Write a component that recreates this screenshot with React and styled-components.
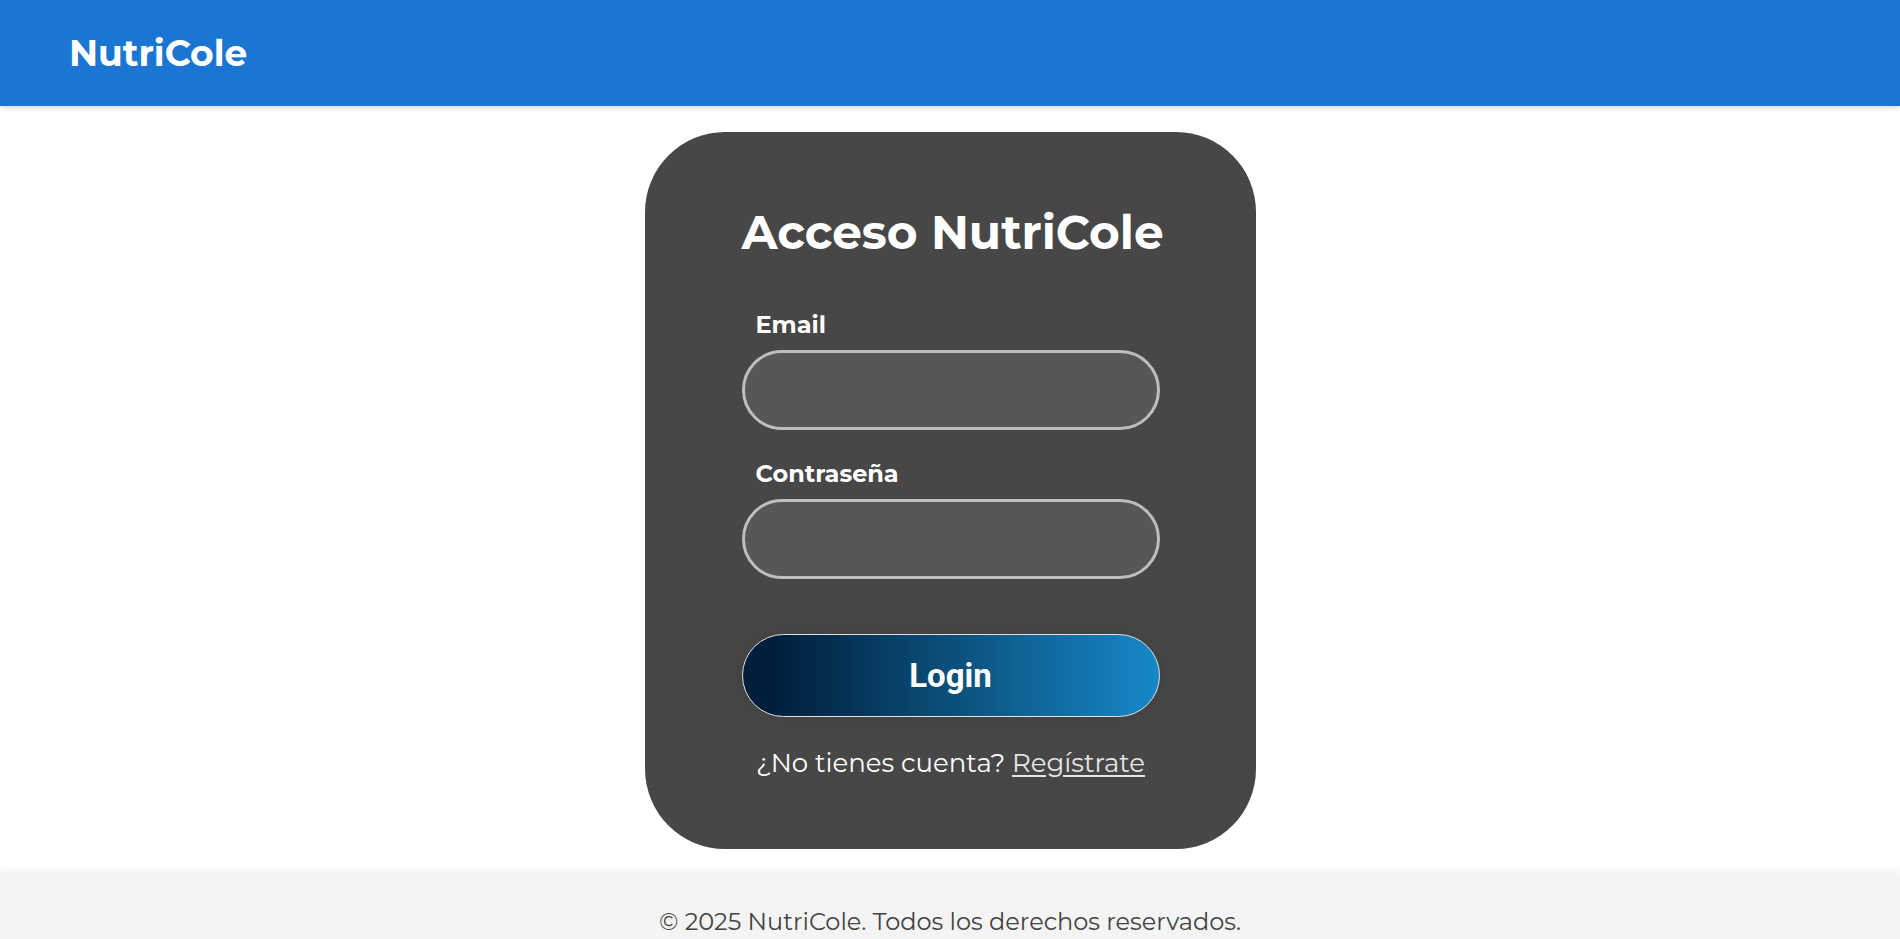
import React from 'react';
import styled, { createGlobalStyle } from 'styled-components';

const GlobalStyle = createGlobalStyle`
  * {
    box-sizing: border-box;
  }
  html, body {
    margin: 0;
    padding: 0;
    background: #ffffff;
    font-family: Montserrat, Inter, "Noto Sans", sans-serif;
  }
`;

const Page = styled.div`
  display: flex;
  flex-direction: column;
  min-height: 100vh;
`;

const Header = styled.header`
  position: relative;
  z-index: 2;
  height: 106px;
  display: flex;
  align-items: center;
  padding: 0 69px;
  background-color: #1a76d2;
  box-shadow: 0 2px 6px rgba(0, 0, 0, 0.15);
`;

const Brand = styled.h1`
  margin: 0;
  color: #ffffff;
  font-size: 36px;
  font-weight: 700;
`;

const Main = styled.main`
  display: flex;
  justify-content: center;
  padding: 26px 0 26px;
`;

const Card = styled.div`
  width: 611px;
  padding: 72px 96px 71px 97px;
  border-radius: 80px;
  background-color: #474747;
  display: flex;
  flex-direction: column;
`;

const Title = styled.h2`
  margin: 0 0 50px;
  height: 58px;
  line-height: 58px;
  text-align: center;
  color: #ffffff;
  font-size: 47px;
  font-weight: 700;
  white-space: nowrap;
`;

const Field = styled.div`
  display: flex;
  flex-direction: column;
  margin-bottom: ${props => props.gap}px;
`;

const Label = styled.label`
  padding-left: 14px;
  margin-bottom: 12px;
  line-height: 26px;
  color: #ffffff;
  font-size: 24px;
  font-weight: 700;
`;

const Input = styled.input`
  width: 100%;
  height: 80px;
  padding: 0 28px;
  border: 3px solid #bebebe;
  border-radius: 40px;
  background-color: #575757;
  color: #ffffff;
  font-size: 20px;
  font-family: inherit;
  outline: none;
`;

const LoginButton = styled.button`
  width: 100%;
  height: 83px;
  border: 1px solid #e0e0e0;
  border-radius: 42px;
  background: linear-gradient(90deg, #001f3d 8%, #0a4a73 45%, #1688c8 100%);
  box-shadow: 0 0 18px rgba(0, 0, 0, 0.12);
  color: #ffffff;
  font-family: Roboto, "Noto Sans", sans-serif;
  font-size: 33px;
  font-weight: 700;
  cursor: pointer;
`;

const SignupText = styled.p`
  margin: 31px 0 0;
  line-height: 30px;
  text-align: center;
  color: #ffffff;
  font-size: 26px;
  font-weight: 400;
`;

const SignupLink = styled.a`
  color: #e6e6e6;
  text-decoration: underline;
  text-underline-offset: 3px;
`;

const Footer = styled.footer`
  position: relative;
  flex: 1;
  padding-top: 32px;
  text-align: center;
  background-color: #f4f4f4;
  box-shadow: 0 -3px 8px rgba(0, 0, 0, 0.08);
  color: #444444;
  font-size: 24px;
`;

export default function App() {
  return (
    <Page>
      <GlobalStyle />
      <Header>
        <Brand>NutriCole</Brand>
      </Header>
      <Main>
        <Card>
          <Title>Acceso NutriCole</Title>
          <Field gap={31}>
            <Label htmlFor="email">Email</Label>
            <Input id="email" type="email" />
          </Field>
          <Field gap={55}>
            <Label htmlFor="password">Contraseña</Label>
            <Input id="password" type="password" />
          </Field>
          <LoginButton type="button">Login</LoginButton>
          <SignupText>
            ¿No tienes cuenta? <SignupLink href="#">Regístrate</SignupLink>
          </SignupText>
        </Card>
      </Main>
      <Footer>© 2025 NutriCole. Todos los derechos reservados.</Footer>
    </Page>
  );
}
